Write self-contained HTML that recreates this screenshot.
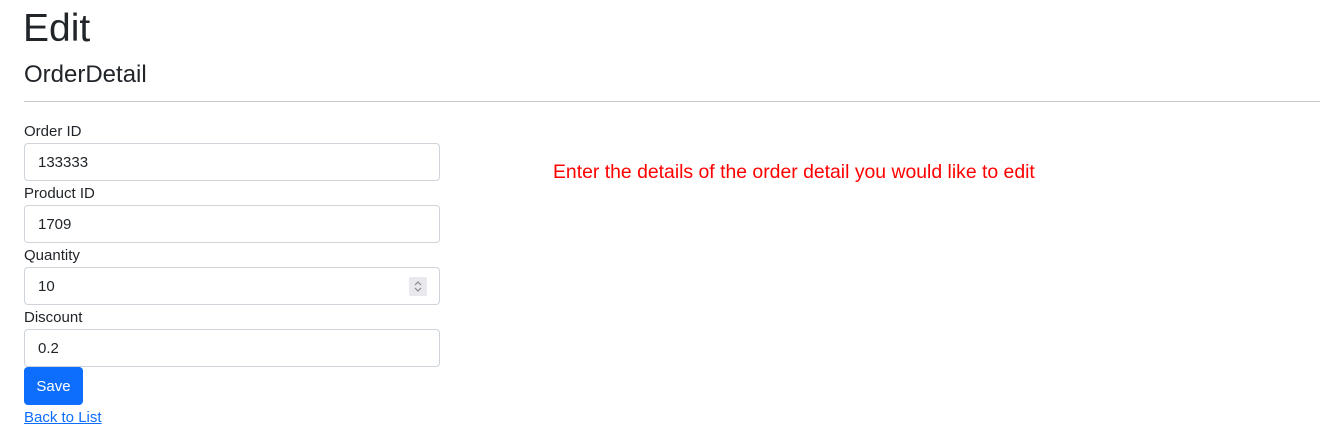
<!DOCTYPE html>
<html><head><style>
body{margin:0;background:#fff;font-family:"Liberation Sans",sans-serif;color:#212529;width:1342px;height:441px;overflow:hidden;position:relative}
h1{position:absolute;left:23px;top:5px;margin:0;font-size:39px;font-weight:400;line-height:48px}
h4{position:absolute;left:24px;top:60px;margin:0;font-size:24px;font-weight:400;line-height:30px}
hr{position:absolute;left:24px;top:101px;width:1296px;margin:0;border:0;border-top:1px solid #c8c8c8}
.l{position:absolute;left:24px;font-size:15px;line-height:20px}
.i{position:absolute;left:24px;width:414px;height:36px;border:1px solid #ced4da;border-radius:4px;font-size:15px;line-height:38px;box-sizing:content-box}
.i span{position:absolute;left:13px}
.sp{position:absolute;right:12px;top:9px;width:18px;height:19px;background:#e9e9ed;border-radius:2px}
.sp svg{position:absolute;left:0;top:0}
.btn{position:absolute;left:24px;top:367px;width:59px;height:38px;background:#0d6efd;color:#fff;border-radius:4px;font-size:15px;line-height:40px;text-align:center}
a{position:absolute;left:24px;top:408px;color:#0d6efd;font-size:15px;line-height:20px;text-decoration:underline}
.red{position:absolute;left:553px;top:160px;color:#f00;font-size:19.4px;line-height:24px;white-space:nowrap}
</style></head><body>
<h1>Edit</h1>
<h4>OrderDetail</h4>
<hr>
<div class="l" style="top:122px">Order ID</div>
<div class="i" style="top:143px"><span>133333</span></div>
<div class="l" style="top:184px">Product ID</div>
<div class="i" style="top:205px"><span>1709</span></div>
<div class="l" style="top:246px">Quantity</div>
<div class="i" style="top:267px"><span>10</span><div class="sp"><svg width="18" height="19"><path d="M6 8l3-3 3 3M6 11l3 3 3-3" fill="none" stroke="#888" stroke-width="1.2"/></svg></div></div>
<div class="l" style="top:308px">Discount</div>
<div class="i" style="top:329px"><span>0.2</span></div>
<div class="btn">Save</div>
<a>Back to List</a>
<div class="red">Enter the details of the order detail you would like to edit</div>
</body></html>
